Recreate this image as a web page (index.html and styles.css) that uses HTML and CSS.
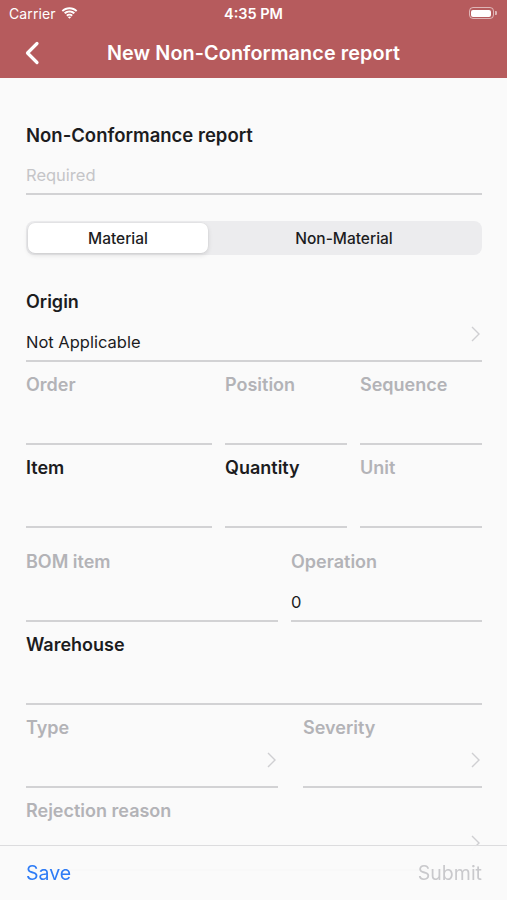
FILE: index.html
```html
<!DOCTYPE html>
<html lang="en">
<head>
    <meta charset="UTF-8">
    <meta name="viewport" content="width=device-width, initial-scale=1.0">
    <title>New Non-Conformance report</title>
    <link rel="stylesheet" href="styles.css">
</head>
<body>
    <header class="app-header">
        <div class="status-bar">
            <div class="status-left">
                <span>Carrier</span>
                <svg class="wifi" width="17" height="12" viewBox="0 0 17 12">
                    <path d="M8.5 2.2c2.5 0 4.8 1 6.5 2.6l1.3-1.4C14.2 1.4 11.5.2 8.5.2S2.8 1.4.7 3.4L2 4.8c1.7-1.6 4-2.6 6.5-2.6z" fill="#fff"/>
                    <path d="M8.5 5.4c1.6 0 3 .6 4.2 1.6l1.3-1.4C12.6 4.2 10.6 3.4 8.5 3.4S4.4 4.2 3 5.6L4.3 7c1.2-1 2.6-1.6 4.2-1.6z" fill="#fff"/>
                    <path d="M8.5 8.6c.8 0 1.5.3 2 .8l1.3-1.4c-.9-.8-2-1.3-3.3-1.3S6.1 7.2 5.2 8l1.3 1.4c.5-.5 1.2-.8 2-.8zM8.5 11.8l1.7-1.8c-.4-.4-1-.6-1.7-.6s-1.3.2-1.7.6z" fill="#fff"/>
                </svg>
            </div>
            <div class="status-time">4:35 PM</div>
            <div class="status-right">
                <div class="battery"><div class="battery-level"></div></div>
                <div class="battery-cap"></div>
            </div>
        </div>
        <nav class="nav-bar">
            <svg class="back" width="16" height="24" viewBox="0 0 16 24">
                <path d="M13 2.5L3.5 12 13 21.5" fill="none" stroke="#fff" stroke-width="3.2" stroke-linecap="round" stroke-linejoin="round"/>
            </svg>
            <h1>New Non-Conformance report</h1>
        </nav>
    </header>

    <main class="form">
        <div class="field first">
            <div class="label title">Non-Conformance report</div>
            <div class="value placeholder">Required</div>
        </div>

        <div class="segmented">
            <div class="segment selected">Material</div>
            <div class="segment">Non-Material</div>
        </div>

        <div class="field origin">
            <div class="label">Origin</div>
            <div class="value">Not Applicable
                <svg class="chevron" width="9" height="16" viewBox="0 0 9 16"><path d="M1 1l7 7-7 7" fill="none" stroke="#cfcfd2" stroke-width="1.4"/></svg>
            </div>
        </div>

        <div class="row cols-3">
            <div class="field">
                <div class="label muted">Order</div>
                <div class="value"></div>
            </div>
            <div class="field">
                <div class="label muted">Position</div>
                <div class="value"></div>
            </div>
            <div class="field">
                <div class="label muted">Sequence</div>
                <div class="value"></div>
            </div>
        </div>

        <div class="row cols-3">
            <div class="field">
                <div class="label">Item</div>
                <div class="value"></div>
            </div>
            <div class="field">
                <div class="label">Quantity</div>
                <div class="value"></div>
            </div>
            <div class="field">
                <div class="label muted">Unit</div>
                <div class="value"></div>
            </div>
        </div>

        <div class="row cols-2 spaced">
            <div class="field">
                <div class="label muted">BOM item</div>
                <div class="value"></div>
            </div>
            <div class="field">
                <div class="label muted">Operation</div>
                <div class="value">0</div>
            </div>
        </div>

        <div class="field">
            <div class="label">Warehouse</div>
            <div class="value"></div>
        </div>

        <div class="row cols-2 wide-gap">
            <div class="field">
                <div class="label muted">Type</div>
                <div class="value">
                    <svg class="chevron" width="9" height="16" viewBox="0 0 9 16"><path d="M1 1l7 7-7 7" fill="none" stroke="#cfcfd2" stroke-width="1.4"/></svg>
                </div>
            </div>
            <div class="field">
                <div class="label muted">Severity</div>
                <div class="value">
                    <svg class="chevron" width="9" height="16" viewBox="0 0 9 16"><path d="M1 1l7 7-7 7" fill="none" stroke="#cfcfd2" stroke-width="1.4"/></svg>
                </div>
            </div>
        </div>

        <div class="field">
            <div class="label muted">Rejection reason</div>
            <div class="value">
                <svg class="chevron" width="9" height="16" viewBox="0 0 9 16"><path d="M1 1l7 7-7 7" fill="none" stroke="#cfcfd2" stroke-width="1.4"/></svg>
            </div>
        </div>
    </main>

    <footer class="toolbar">
        <span class="save">Save</span>
        <span class="submit">Submit</span>
    </footer>
</body>
</html>
```

FILE: styles.css
```css
* {
    box-sizing: border-box;
    margin: 0;
    padding: 0;
    font-family: Inter, "Noto Sans", sans-serif;
}

body {
    background-color: #fafafa;
    width: 507px;
    height: 900px;
    overflow: hidden;
    color: #1c1c1e;
}

.app-header {
    background-color: #b65b5d;
    color: white;
}

.status-bar {
    height: 28px;
    display: flex;
    align-items: center;
    justify-content: space-between;
    padding: 0 9px 2px 9px;
    font-size: 14px;
}

.status-left {
    display: flex;
    align-items: center;
    gap: 5px;
    width: 120px;
    letter-spacing: 0.1px;
}

.status-time {
    font-weight: 600;
    font-size: 14.5px;
}

.status-right {
    width: 120px;
    display: flex;
    justify-content: flex-end;
    align-items: center;
    padding-right: 1px;
}

.battery {
    width: 25px;
    height: 12px;
    border: 1px solid rgba(255, 255, 255, 0.55);
    border-radius: 4px;
    padding: 1.5px;
}

.battery-level {
    width: 100%;
    height: 100%;
    background-color: white;
    border-radius: 2px;
}

.battery-cap {
    width: 2px;
    height: 4px;
    margin-left: 1px;
    background-color: rgba(255, 255, 255, 0.55);
    border-radius: 0 1px 1px 0;
}

.nav-bar {
    height: 50px;
    display: flex;
    align-items: center;
    padding-left: 24px;
}

.nav-bar h1 {
    flex: 1;
    text-align: center;
    font-size: 19.8px;
    font-weight: 600;
    margin-right: 24px;
    margin-left: -16px;
    letter-spacing: 0.1px;
}

.form {
    padding: 46px 25px 0 26px;
}

.field {
    margin-top: 12px;
}

.field.first {
    margin-top: 0;
}

.label {
    font-size: 18px;
    font-weight: 600;
    line-height: 22px;
    color: #1c1c1e;
    white-space: nowrap;
}

.label.title {
    font-size: 18.5px;
}

.label.muted {
    color: #b3b3b7;
}

.value {
    margin-top: 11px;
    height: 38px;
    line-height: 36px;
    font-size: 16.5px;
    border-bottom: 2px solid #d2d2d4;
    position: relative;
    color: #1c1c1e;
}

.value.placeholder {
    color: #c5c5c8;
}

.chevron {
    position: absolute;
    right: 2px;
    top: 2px;
}

.segmented {
    margin-top: 26px;
    height: 34px;
    background-color: #ececee;
    border-radius: 8px;
    padding: 2px;
    display: flex;
    font-size: 15.5px;
    font-weight: 500;
}

.segment {
    flex: 1;
    display: flex;
    align-items: center;
    justify-content: center;
    color: #1c1c1e;
}

.segment.selected {
    flex: 0 0 180px;
    background-color: white;
    border-radius: 7px;
    box-shadow: 0 2px 5px rgba(0, 0, 0, 0.12), 0 0 0 0.5px rgba(0, 0, 0, 0.04);
}

.field.origin {
    margin-top: 36px;
}

.row {
    display: grid;
    gap: 13px;
}

.cols-3 {
    grid-template-columns: 186px 1fr 1fr;
}

.cols-2 {
    grid-template-columns: 252px 1fr;
}

.row.spaced .field {
    margin-top: 23px;
}

.row.wide-gap {
    gap: 25px;
}

.toolbar {
    position: fixed;
    left: 0;
    right: 0;
    bottom: 0;
    height: 55px;
    background-color: rgba(250, 250, 250, 0.94);
    border-top: 1px solid #dcdcde;
    display: flex;
    align-items: center;
    justify-content: space-between;
    padding: 0 25px 0 26px;
    font-size: 19.5px;
}

.save {
    color: #2e7cf6;
}

.submit {
    color: #c9c9cc;
}
```
